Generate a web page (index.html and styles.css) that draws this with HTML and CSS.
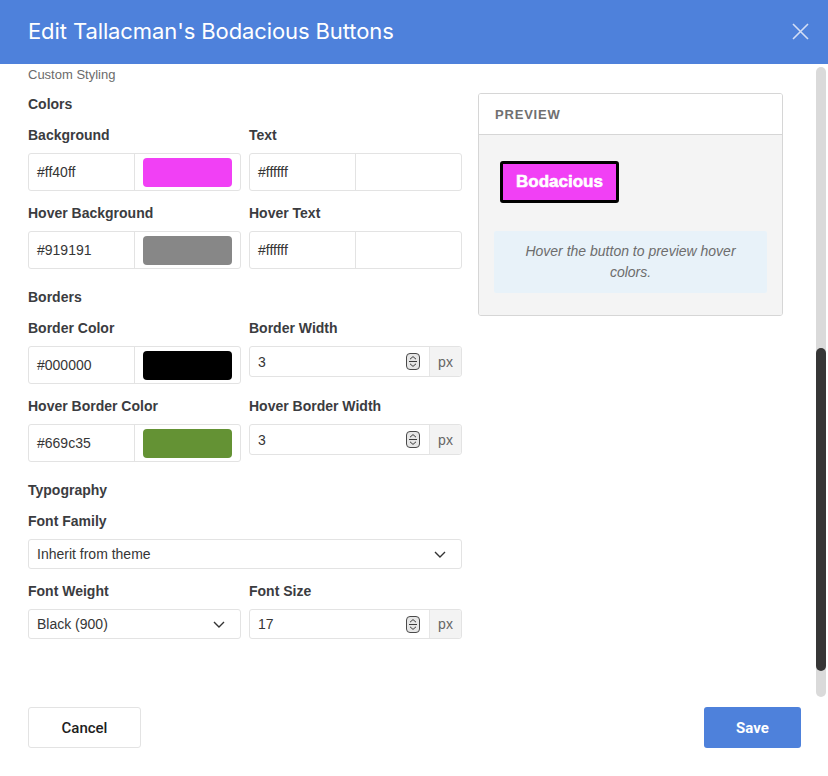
FILE: index.html
```html
<!doctype html>
<html lang="en">
<head>
  <meta charset="utf-8">
  <title>Edit Tallacman's Bodacious Buttons</title>
  <link rel="stylesheet" href="styles.css">
</head>
<body>
  <div class="modal">
    <div class="modal-head">
      <h1>Edit Tallacman's Bodacious Buttons</h1>
      <span class="close">
        <svg width="17" height="17" viewBox="0 0 17 17"><path d="M1 1L16 16M16 1L1 16" stroke="#d3def5" stroke-width="1.6" fill="none"/></svg>
      </span>
    </div>

    <div class="modal-body">
      <div class="scroll-area">
        <div class="crumb">Custom Styling</div>
        <div class="content">
          <div class="form-col">
            <h3 class="section first">Colors</h3>
            <div class="grid">
              <div class="field">
                <label>Background</label>
                <div class="color-input"><span class="hex">#ff40ff</span><span class="swatch-wrap"><span class="swatch" style="background:#f140f5"></span></span></div>
              </div>
              <div class="field">
                <label>Text</label>
                <div class="color-input"><span class="hex">#ffffff</span><span class="swatch-wrap"><span class="swatch" style="background:#ffffff"></span></span></div>
              </div>
              <div class="field">
                <label>Hover Background</label>
                <div class="color-input"><span class="hex">#919191</span><span class="swatch-wrap"><span class="swatch" style="background:#878787"></span></span></div>
              </div>
              <div class="field">
                <label>Hover Text</label>
                <div class="color-input"><span class="hex">#ffffff</span><span class="swatch-wrap"><span class="swatch" style="background:#ffffff"></span></span></div>
              </div>
            </div>

            <h3 class="section">Borders</h3>
            <div class="grid">
              <div class="field">
                <label>Border Color</label>
                <div class="color-input"><span class="hex">#000000</span><span class="swatch-wrap"><span class="swatch" style="background:#000000"></span></span></div>
              </div>
              <div class="field">
                <label>Border Width</label>
                <div class="num-input">
                  <span class="num">3 <svg class="spin" width="14" height="17" viewBox="0 0 14 17"><rect x="0.5" y="0.5" width="13" height="16" rx="3.5" fill="#e6e6e6" stroke="#4a4a4a"/><path d="M4 6.2L7 3.6L10 6.2M3 8.5H11M4 10.8L7 13.4L10 10.8" stroke="#3a3a3a" stroke-width="1" fill="none"/></svg></span>
                  <span class="unit">px</span>
                </div>
              </div>
              <div class="field">
                <label>Hover Border Color</label>
                <div class="color-input"><span class="hex">#669c35</span><span class="swatch-wrap"><span class="swatch" style="background:#649234"></span></span></div>
              </div>
              <div class="field">
                <label>Hover Border Width</label>
                <div class="num-input">
                  <span class="num">3 <svg class="spin" width="14" height="17" viewBox="0 0 14 17"><rect x="0.5" y="0.5" width="13" height="16" rx="3.5" fill="#e6e6e6" stroke="#4a4a4a"/><path d="M4 6.2L7 3.6L10 6.2M3 8.5H11M4 10.8L7 13.4L10 10.8" stroke="#3a3a3a" stroke-width="1" fill="none"/></svg></span>
                  <span class="unit">px</span>
                </div>
              </div>
            </div>

            <h3 class="section">Typography</h3>
            <div class="field">
              <label>Font Family</label>
              <div class="select">Inherit from theme <svg width="12" height="7" viewBox="0 0 12 7"><path d="M1 1L6 6L11 1" stroke="#333" stroke-width="1.4" fill="none"/></svg></div>
            </div>
            <div class="grid row-gap">
              <div class="field">
                <label>Font Weight</label>
                <div class="select narrow">Black (900) <svg width="12" height="7" viewBox="0 0 12 7"><path d="M1 1L6 6L11 1" stroke="#333" stroke-width="1.4" fill="none"/></svg></div>
              </div>
              <div class="field">
                <label>Font Size</label>
                <div class="num-input short">
                  <span class="num">17 <svg class="spin" width="14" height="17" viewBox="0 0 14 17"><rect x="0.5" y="0.5" width="13" height="16" rx="3.5" fill="#e6e6e6" stroke="#4a4a4a"/><path d="M4 6.2L7 3.6L10 6.2M3 8.5H11M4 10.8L7 13.4L10 10.8" stroke="#3a3a3a" stroke-width="1" fill="none"/></svg></span>
                  <span class="unit">px</span>
                </div>
              </div>
            </div>
          </div>

          <div class="preview">
            <div class="preview-head">Preview</div>
            <div class="preview-body">
              <div class="demo-wrap"><span class="demo-btn">Bodacious</span></div>
              <div class="hint">Hover the button to preview hover colors.</div>
            </div>
          </div>
        </div>
      </div>
      <div class="scrollbar"><div class="thumb"></div></div>
    </div>

    <div class="modal-foot">
      <button class="btn cancel">Cancel</button>
      <button class="btn save">Save</button>
    </div>
  </div>
</body>
</html>
```

FILE: styles.css
```css
* { box-sizing: border-box; }
html, body { margin: 0; }
body {
  font-family: "Liberation Sans", Arial, sans-serif;
  color: #333;
  background: #fff;
}

.modal {
  display: flex;
  flex-direction: column;
  height: 776px;
}

/* header */
.modal-head {
  flex: none;
  height: 64px;
  background: #4e81db;
  display: flex;
  align-items: center;
  justify-content: space-between;
  padding: 0 19px 0 28px;
}
.modal-head h1 {
  margin: 0 0 2px;
  font-family: Inter, Roboto, sans-serif;
  font-weight: 400;
  font-size: 22px;
  letter-spacing: -0.1px;
  color: #fff;
}
.close { display: flex; margin-top: -2px; }

/* body */
.modal-body {
  flex: 1;
  min-height: 0;
  display: flex;
}
.scroll-area {
  flex: 1;
  overflow: hidden;
  padding: 3px 0 0 28px;
}
.scrollbar {
  flex: none;
  width: 10px;
  margin: 3px 2px 3px 0;
  background: #dadada;
  border-radius: 5px;
}
.scrollbar .thumb {
  margin-top: 281px;
  height: 323px;
  background: #363636;
  border-radius: 5px;
}

.crumb {
  font-size: 13px;
  line-height: 16px;
  color: #6b6b6b;
}
.content {
  display: flex;
  align-items: flex-start;
  gap: 16px;
}
.form-col { width: 434px; }

.section {
  margin: 20px 0 15px;
  font-size: 14px;
  line-height: 16px;
  font-weight: bold;
  color: #3b3c3f;
}
.section.first { margin-top: 13px; }

.grid {
  display: grid;
  grid-template-columns: 213px 213px;
  column-gap: 8px;
  row-gap: 14px;
  align-items: start;
}
.grid.row-gap { margin-top: 14px; }

.field label {
  display: block;
  font-size: 14px;
  line-height: 16px;
  font-weight: bold;
  color: #3b3c3f;
  margin-bottom: 10px;
}

.color-input {
  display: flex;
  height: 38px;
  border: 1px solid #e3e3e3;
  border-radius: 3px;
}
.color-input .hex {
  width: 106px;
  border-right: 1px solid #e3e3e3;
  padding-left: 8px;
  display: flex;
  align-items: center;
  font-size: 14px;
  color: #363636;
}
.color-input .swatch-wrap {
  flex: 1;
  display: flex;
  padding: 4px 8px 3px;
}
.color-input .swatch {
  flex: 1;
  border-radius: 4px;
}

.num-input {
  display: flex;
  height: 31px;
  border: 1px solid #e3e3e3;
  border-radius: 3px;
  font-size: 14px;
}
.num-input.short { height: 30px; }
.num-input .num {
  flex: 1;
  display: flex;
  align-items: center;
  justify-content: space-between;
  padding: 0 9px 0 8px;
  color: #363636;
}
.num-input .unit {
  width: 32px;
  background: #f3f3f3;
  border-left: 1px solid #e6e6e6;
  color: #666;
  display: flex;
  align-items: center;
  justify-content: center;
  border-radius: 0 3px 3px 0;
}

.select {
  height: 30px;
  border: 1px solid #e3e3e3;
  border-radius: 3px;
  display: flex;
  align-items: center;
  justify-content: space-between;
  padding: 0 15px 0 8px;
  font-size: 14px;
  color: #363636;
}

/* preview panel */
.preview {
  width: 305px;
  margin-top: 10px;
  border: 1px solid #d6d6d6;
  border-radius: 3px;
  overflow: hidden;
}
.preview-head {
  height: 41px;
  border-bottom: 1px solid #d6d6d6;
  padding: 0 16px;
  display: flex;
  align-items: center;
  font-size: 13px;
  font-weight: bold;
  text-transform: uppercase;
  letter-spacing: 0.8px;
  color: #707070;
  background: #fff;
}
.preview-body {
  background: #f4f4f4;
  padding: 16px 15px 22px;
}
.demo-wrap { padding: 10px 6px 28px; }
.demo-btn {
  display: inline-block;
  background: #f140f5;
  color: #fff;
  border: 3px solid #000;
  border-radius: 3px;
  padding: 8px 13px;
  font-size: 17px;
  line-height: 20px;
  font-weight: 900;
  -webkit-text-stroke: 0.6px #fff;
}
.hint {
  background: #e8f2f9;
  border-radius: 2px;
  padding: 10px 16px;
  font-size: 14px;
  line-height: 21px;
  font-style: italic;
  color: #6d6d6d;
  text-align: center;
}

/* footer */
.modal-foot {
  flex: none;
  height: 76px;
  display: flex;
  justify-content: space-between;
  align-items: flex-start;
  padding: 7px 27px 0 28px;
}
.btn {
  height: 41px;
  border-radius: 3px;
  font-family: Roboto, sans-serif;
  font-size: 15px;
  cursor: pointer;
}
.cancel {
  width: 113px;
  background: #fff;
  border: 1px solid #e3e3e3;
  color: #1e1e1e;
  font-weight: 500;
}
.save {
  width: 97px;
  background: #4e81db;
  border: none;
  color: #fff;
  font-weight: 700;
}
```
